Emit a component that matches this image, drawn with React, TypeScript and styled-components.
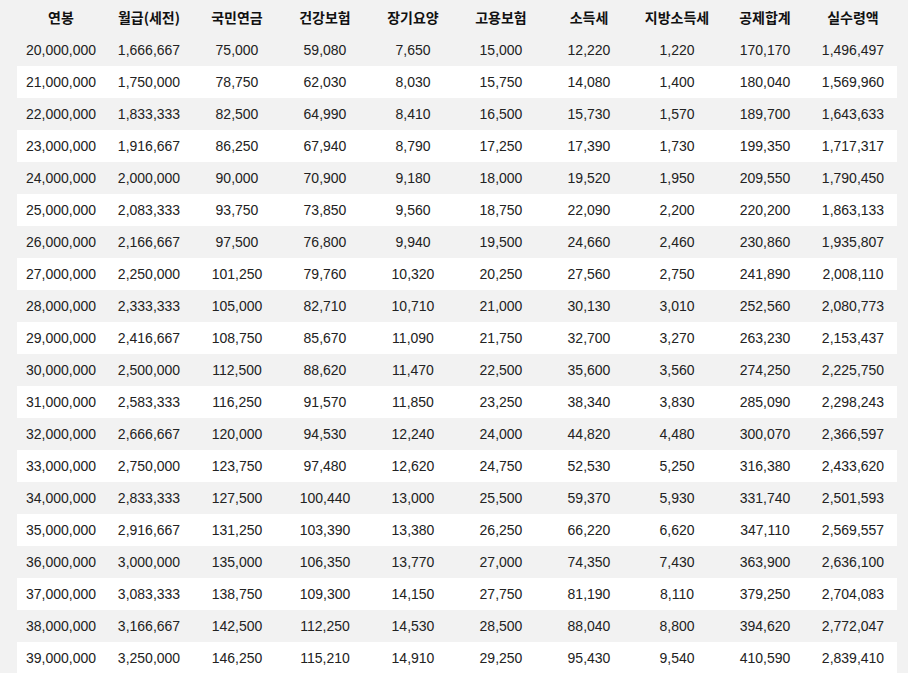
import React from 'react';
import styled, { createGlobalStyle } from 'styled-components';

const GlobalStyle = createGlobalStyle`
  html, body {
    margin: 0;
    padding: 0;
    background: #f2f2f2;
  }
  body {
    font-family: "Liberation Sans", Arial, "Noto Sans CJK KR", sans-serif;
    color: #222;
  }
`;

const Page = styled.div`
  padding: 0 11px 0 17px;
`;

const Table = styled.table`
  width: 880px;
  border-collapse: collapse;
  table-layout: fixed;
  font-size: 14px;
`;

const HeadCell = styled.th`
  height: 34px;
  padding: 0;
  text-align: center;
  font-family: "Noto Sans CJK KR", "Liberation Sans", sans-serif;
  font-weight: 700;
  font-size: 14px;
  color: #111;
`;

const Row = styled.tr<{ $striped: boolean }>`
  background: ${(p) => (p.$striped ? '#ffffff' : 'transparent')};
`;

const Cell = styled.td`
  height: 32px;
  padding: 0;
  text-align: center;
  white-space: nowrap;
`;

const headers = ['연봉', '월급(세전)', '국민연금', '건강보험', '장기요양', '고용보험', '소득세', '지방소득세', '공제합계', '실수령액'];

const rows: string[][] = [
  ['20,000,000', '1,666,667', '75,000', '59,080', '7,650', '15,000', '12,220', '1,220', '170,170', '1,496,497'],
  ['21,000,000', '1,750,000', '78,750', '62,030', '8,030', '15,750', '14,080', '1,400', '180,040', '1,569,960'],
  ['22,000,000', '1,833,333', '82,500', '64,990', '8,410', '16,500', '15,730', '1,570', '189,700', '1,643,633'],
  ['23,000,000', '1,916,667', '86,250', '67,940', '8,790', '17,250', '17,390', '1,730', '199,350', '1,717,317'],
  ['24,000,000', '2,000,000', '90,000', '70,900', '9,180', '18,000', '19,520', '1,950', '209,550', '1,790,450'],
  ['25,000,000', '2,083,333', '93,750', '73,850', '9,560', '18,750', '22,090', '2,200', '220,200', '1,863,133'],
  ['26,000,000', '2,166,667', '97,500', '76,800', '9,940', '19,500', '24,660', '2,460', '230,860', '1,935,807'],
  ['27,000,000', '2,250,000', '101,250', '79,760', '10,320', '20,250', '27,560', '2,750', '241,890', '2,008,110'],
  ['28,000,000', '2,333,333', '105,000', '82,710', '10,710', '21,000', '30,130', '3,010', '252,560', '2,080,773'],
  ['29,000,000', '2,416,667', '108,750', '85,670', '11,090', '21,750', '32,700', '3,270', '263,230', '2,153,437'],
  ['30,000,000', '2,500,000', '112,500', '88,620', '11,470', '22,500', '35,600', '3,560', '274,250', '2,225,750'],
  ['31,000,000', '2,583,333', '116,250', '91,570', '11,850', '23,250', '38,340', '3,830', '285,090', '2,298,243'],
  ['32,000,000', '2,666,667', '120,000', '94,530', '12,240', '24,000', '44,820', '4,480', '300,070', '2,366,597'],
  ['33,000,000', '2,750,000', '123,750', '97,480', '12,620', '24,750', '52,530', '5,250', '316,380', '2,433,620'],
  ['34,000,000', '2,833,333', '127,500', '100,440', '13,000', '25,500', '59,370', '5,930', '331,740', '2,501,593'],
  ['35,000,000', '2,916,667', '131,250', '103,390', '13,380', '26,250', '66,220', '6,620', '347,110', '2,569,557'],
  ['36,000,000', '3,000,000', '135,000', '106,350', '13,770', '27,000', '74,350', '7,430', '363,900', '2,636,100'],
  ['37,000,000', '3,083,333', '138,750', '109,300', '14,150', '27,750', '81,190', '8,110', '379,250', '2,704,083'],
  ['38,000,000', '3,166,667', '142,500', '112,250', '14,530', '28,500', '88,040', '8,800', '394,620', '2,772,047'],
  ['39,000,000', '3,250,000', '146,250', '115,210', '14,910', '29,250', '95,430', '9,540', '410,590', '2,839,410'],
];

export default function App() {
  return (
    <>
      <GlobalStyle />
      <Page>
        <Table>
          <thead>
            <tr>
              {headers.map((h) => (
                <HeadCell key={h}>{h}</HeadCell>
              ))}
            </tr>
          </thead>
          <tbody>
            {rows.map((r, i) => (
              <Row key={r[0]} $striped={i % 2 === 1}>
                {r.map((v, j) => (
                  <Cell key={j}>{v}</Cell>
                ))}
              </Row>
            ))}
          </tbody>
        </Table>
      </Page>
    </>
  );
}
